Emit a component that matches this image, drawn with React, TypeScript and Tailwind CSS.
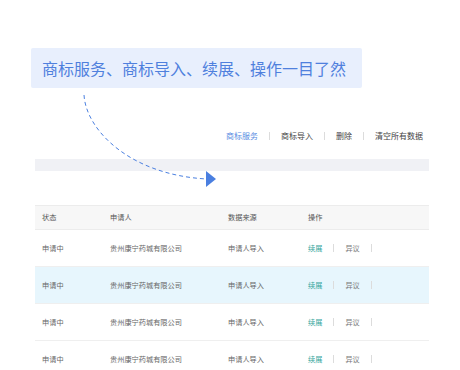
import React from "react";

const font = { fontFamily: '"Noto Sans CJK SC", "Noto Sans", sans-serif' };

function Sep() {
  return <span className="inline-block w-px h-[8px] bg-[#dcdcdc]" />;
}

export default function App() {
  const rows = [false, true, false, false];
  return (
    <div className="relative w-[460px] h-[370px] bg-white overflow-hidden" style={font}>
      <div className="mt-[48px] ml-[31px] w-[331px] h-[40px] bg-[#e8effd] rounded-[2px] flex items-center pl-[11px] text-[16px] text-[#4f80dd] tracking-[0px]">
        商标服务、商标导入、续展、操作一目了然
      </div>

      <div className="mt-[41px] h-[14px] flex items-center justify-end pr-[37px] gap-[11px] text-[8px] text-[#444]">
        <span className="text-[#5b8de2]">商标服务</span>
        <Sep />
        <span>商标导入</span>
        <Sep />
        <span>删除</span>
        <Sep />
        <span>清空所有数据</span>
      </div>

      <div className="mt-[16px] ml-[35px] w-[394px] h-[12px] bg-[#f0f1f5]" />

      <div className="mt-[34px] ml-[35px] w-[394px] border-t border-[#ececec] text-[7.2px] text-[#666]">
        <div className="grid grid-cols-[68px_118px_80px_1fr] pl-[7px] h-[24px] items-center bg-[#f7f7f7] border-b border-[#ececec] text-[#555]">
          <span>状态</span>
          <span>申请人</span>
          <span>数据来源</span>
          <span>操作</span>
        </div>
        {rows.map((hl, i) => (
          <div
            key={i}
            className={`grid grid-cols-[68px_118px_80px_1fr] pl-[7px] h-[37px] items-center border-b border-[#efefef] ${hl ? "bg-[#e7f6fd]" : "bg-white"}`}
          >
            <span>申请中</span>
            <span>贵州康宁药城有限公司</span>
            <span>申请人导入</span>
            <span className="flex items-center gap-[11px]">
              <span className="text-[#34a59c]">续展</span>
              <Sep />
              <span className="text-[#777]">异议</span>
              <Sep />
            </span>
          </div>
        ))}
      </div>

      <svg className="absolute left-0 top-0 pointer-events-none" width="460" height="370" viewBox="0 0 460 370">
        <path
          d="M84 95 C 86 130, 130 175, 207 179"
          fill="none"
          stroke="#4a7fe0"
          strokeWidth="1"
          strokeDasharray="4 3"
        />
        <polygon points="206,171 216,179 206,187" fill="#4a7fe0" />
      </svg>
    </div>
  );
}
